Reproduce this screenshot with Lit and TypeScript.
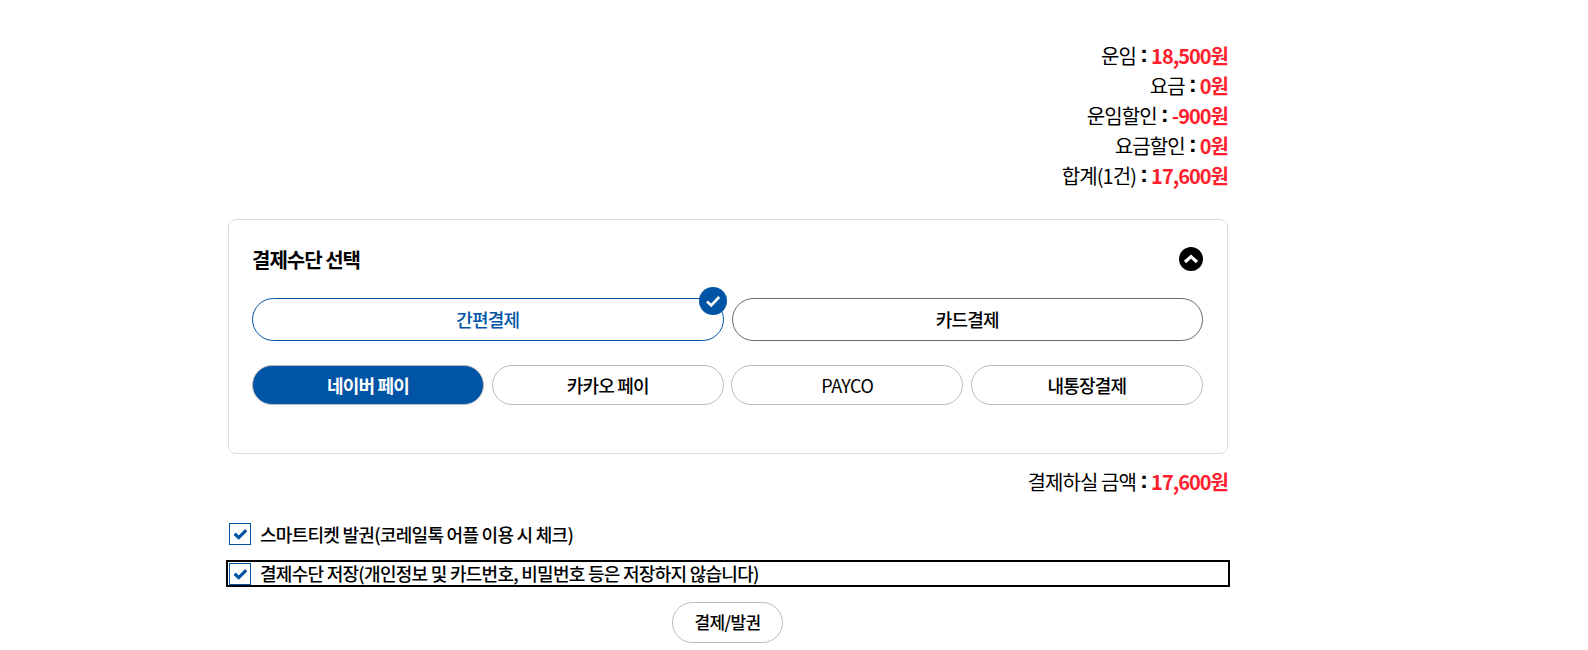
import { LitElement, html, css, svg } from "lit";
import { customElement } from "lit/decorators.js";

const check = svg`<path d="M4.6 9.8l4.2 3.8 7.4-7.4" fill="none" stroke="#0054a6" stroke-width="3.2"/>`;

@customElement("app-root")
export class AppRoot extends LitElement {
  static styles = css`
    :host {
      display: block;
      font-family: "Noto Sans CJK KR", "Noto Sans", sans-serif;
      color: #000;
      background: #fff;
      height: 650px;
      overflow: hidden;
    }
    .wrap { width: 1000px; margin-left: 228px; padding-top: 41px; }
    .sum { text-align: right; font-size: 20px; font-weight: 400; letter-spacing: -0.9px; }
    .sum div { height: 30px; line-height: 30px; }
    .sum b, .total b { color: #ff1e2d; font-weight: 700; letter-spacing: -1px; }
    .colon {
      font-family: "Liberation Sans", sans-serif;
      font-weight: 700; font-size: 24px; line-height: 20px;
      margin: 0 3px 0 4px; vertical-align: 2px; letter-spacing: 0;
    }
    .box {
      box-sizing: border-box;
      height: 235px;
      margin-top: 28px;
      border: 1px solid #ddd;
      border-radius: 8px;
      padding: 0 24px 0 23px;
    }
    .head { display: flex; justify-content: space-between; align-items: center; height: 78px; }
    .head h2 { margin: 0; font-size: 20px; font-weight: 700; letter-spacing: -1px; }
    .tabs { display: flex; gap: 8px; }
    .tab {
      position: relative;
      box-sizing: border-box;
      flex: 1;
      height: 43px;
      border: 1px solid #666;
      border-radius: 22px;
      display: flex; align-items: center; justify-content: center;
      font-size: 18px; font-weight: 500; letter-spacing: -0.8px;
      padding-bottom: 2px;
    }
    .tab.on { border-color: #0054a6; color: #0054a6; }
    .badge { position: absolute; top: -12px; right: -4px; width: 28px; height: 28px; }
    .pays { display: flex; justify-content: space-between; margin-top: 24px; }
    .pay {
      box-sizing: border-box;
      width: 232px;
      height: 40px;
      border: 1px solid #bbb;
      border-radius: 20px;
      display: flex; align-items: center; justify-content: center;
      font-size: 18px; font-weight: 500; letter-spacing: -0.8px;
    }
    .pay.on { background: #0054a6; color: #fff; font-weight: 700; }
    .pay.latin { font-weight: 400; letter-spacing: -0.5px; }
    .total { text-align: right; font-size: 20px; line-height: 30px; letter-spacing: -0.9px; margin-top: 13px; height: 30px; }
    .opt {
      display: flex; gap: 9px;
      font-size: 18px; font-weight: 500; letter-spacing: -0.72px; line-height: 23px; height: 24px;
      padding-left: 1px;
    }
    .opt.first { margin-top: 25px; align-items: center; }
    .opt.second { margin-top: 16px; height: 23px; align-items: flex-end; outline: 2px solid #000; }
    .opt.second span.t { align-self: center; }
    .cb { box-sizing: border-box; width: 22px; height: 22px; border: 1px solid #0054a6; flex: none; }
    .cb svg { display: block; width: 20px; height: 20px; }
    .actions { display: flex; justify-content: center; margin-top: 17px; padding-right: 1px; }
    .go {
      box-sizing: border-box; width: 111px; height: 41px;
      border: 1px solid #bbb; border-radius: 21px; background: #fff;
      font: 500 17px "Noto Sans CJK KR", sans-serif; letter-spacing: -0.6px; color: #000;
      padding: 0 0 2px;
    }
  `;

  private row(label: string, value: string) {
    return html`<div>${label}<span class="colon">:</span><b>${value}</b></div>`;
  }

  render() {
    return html`
      <div class="wrap">
        <div class="sum">
          ${this.row("운임", "18,500원")}
          ${this.row("요금", "0원")}
          ${this.row("운임할인", "-900원")}
          ${this.row("요금할인", "0원")}
          ${this.row("합계(1건)", "17,600원")}
        </div>
        <section class="box">
          <div class="head">
            <h2>결제수단 선택</h2>
            <svg width="24" height="24" viewBox="0 0 24 24">
              <circle cx="12" cy="12" r="12" fill="#000"/>
              <path d="M6 15l6-5.4 6 5.4" fill="none" stroke="#fff" stroke-width="3.2"/>
            </svg>
          </div>
          <div class="tabs">
            <div class="tab on">간편결제
              <svg class="badge" viewBox="0 0 28 28">
                <circle cx="14" cy="14" r="14" fill="#0054a6"/>
                <path d="M8 14.5l4.2 4 8-8.5" fill="none" stroke="#fff" stroke-width="2.6"/>
              </svg>
            </div>
            <div class="tab">카드결제</div>
          </div>
          <div class="pays">
            <div class="pay on">네이버 페이</div>
            <div class="pay">카카오 페이</div>
            <div class="pay latin">PAYCO</div>
            <div class="pay">내통장결제</div>
          </div>
        </section>
        <div class="total">결제하실 금액<span class="colon">:</span><b>17,600원</b></div>
        <div class="opt first">
          <span class="cb"><svg viewBox="0 0 20 20">${check}</svg></span><span class="t">스마트티켓 발권(코레일톡 어플 이용 시 체크)</span>
        </div>
        <div class="opt second">
          <span class="cb"><svg viewBox="0 0 20 20">${check}</svg></span><span class="t">결제수단 저장(개인정보 및 카드번호, 비밀번호 등은 저장하지 않습니다)</span>
        </div>
        <div class="actions"><button class="go">결제/발권</button></div>
      </div>
    `;
  }
}
